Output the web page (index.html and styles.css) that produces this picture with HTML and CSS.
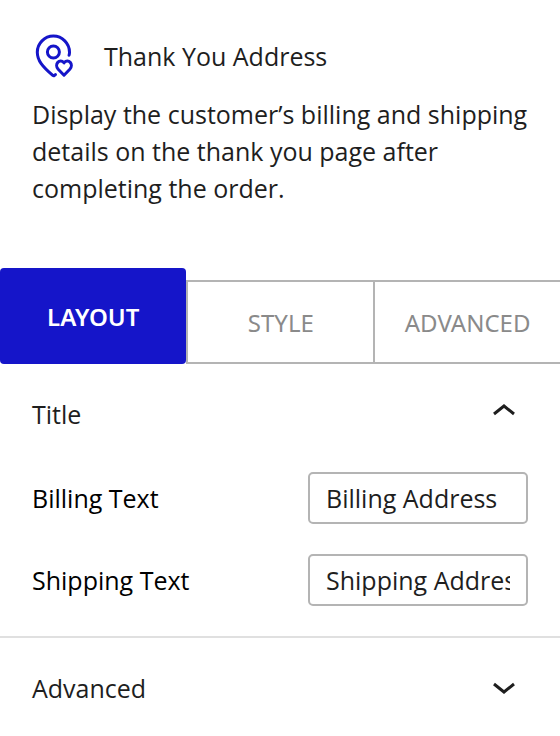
FILE: index.html
```html
<!DOCTYPE html>
<html lang="en">
<head>
<meta charset="utf-8">
<meta name="viewport" content="width=device-width, initial-scale=1">
<title>Thank You Address</title>
<link rel="stylesheet" href="styles.css">
</head>
<body>
<main class="inspector">
  <header class="block-card">
    <div class="block-heading">
      <svg class="block-icon" viewBox="0 0 44 44" aria-hidden="true">
        <path d="M23.400 40.600l-1 .9q-.8.600-1.600-.1C10.500 32.500 5.300 26.500 5.300 18.200a16.100 16.100 0 0 1 32.200 0q0 1.600-.4 3"/>
        <circle cx="21.400" cy="18" r="6"/>
        <path d="M32 41.200L26.200 35.300C21.800 30.300 27.500 24 32 28.800C36.500 24 42.200 30.300 37.800 35.300z"/>
      </svg>
      <h1 class="block-title">Thank You Address</h1>
    </div>
    <p class="block-description">Display the customer’s billing and shipping details on the thank you page after completing the order.</p>
  </header>
  <div class="tabs" role="tablist">
    <button class="tab tab-active" type="button" role="tab" aria-selected="true">LAYOUT</button>
    <button class="tab" type="button" role="tab" aria-selected="false">STYLE</button>
    <button class="tab" type="button" role="tab" aria-selected="false">ADVANCED</button>
  </div>
  <section class="panel">
    <button class="panel-toggle" type="button" aria-expanded="true">Title
      <svg class="chevron" viewBox="0 0 24 22" aria-hidden="true"><path d="M2 11l10-8 10 8"/></svg>
    </button>
    <div class="fields">
      <div class="field">
        <label for="billing">Billing Text</label>
        <input id="billing" type="text" value="Billing Address">
      </div>
      <div class="field">
        <label for="shipping">Shipping Text</label>
        <input id="shipping" type="text" value="Shipping Address">
      </div>
    </div>
  </section>
  <section class="panel">
    <button class="panel-toggle" type="button" aria-expanded="false">Advanced
      <svg class="chevron" viewBox="0 0 24 22" aria-hidden="true"><path d="M2 7l10 8 10-8"/></svg>
    </button>
  </section>
</main>
</body>
</html>
```

FILE: styles.css
```css
* { box-sizing: border-box; }
body { margin: 0; background: #fff; color: #1e1e1e; font: 25px/37px "Open Sans", sans-serif; }
button, input { font: inherit; color: inherit; }
.block-card { padding: 34px 24px 60px 32px; }
.block-heading { display: flex; align-items: center; gap: 28px; }
.block-icon { width: 44px; height: 44px; fill: none; stroke: #1515c9; stroke-width: 3px; stroke-linecap: round; stroke-linejoin: round; }
.block-title { margin: 0; font-size: 25px; font-weight: 400; }
.block-description { margin: 18px 0 0; }
.tabs { display: flex; align-items: end; padding-top: 1px; }
.tab { flex: 1 1 0; height: 84px; padding: 0; border: 2px solid #b4b4b4; border-right: 0; background: #fff; color: #8a8a8a; font-family: "Noto Sans", sans-serif; font-size: 24px; }
.tab-active { height: 96px; flex: 0 0 33.3%; border: 0; border-radius: 4px; background: #1515c9; color: #fff; font-weight: 600; }
.panel { border-bottom: 2px solid #e0e0e0; }
.panel:last-child { border-bottom: 0; }
.panel-toggle { display: flex; align-items: center; justify-content: space-between; width: 100%; height: 100px; padding: 0 44px 0 32px; border: 0; background: none; }
.chevron { width: 24px; height: 22px; fill: none; stroke: #1e1e1e; stroke-width: 3px; }
.fields { display: grid; gap: 30px; padding: 8px 32px 30px; }
.field { display: grid; grid-template-columns: 1fr 220px; align-items: center; color: #000; }
.field input { width: 100%; height: 52px; padding: 0 16px; border: 2px solid #b4b4b4; border-radius: 5px; background: #fff; color: #1e1e1e; }
```
